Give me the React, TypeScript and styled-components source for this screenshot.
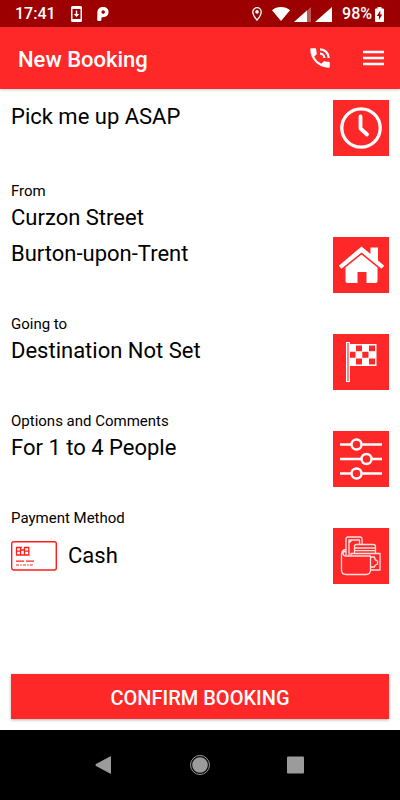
import React from "react";
import styled, { createGlobalStyle } from "styled-components";

const GlobalStyle = createGlobalStyle`
  * { box-sizing: border-box; }
  body {
    margin: 0;
    background: #ffffff;
    color: #000000;
    font-family: Roboto, "Liberation Sans", sans-serif;
  }
  button { font-family: inherit; }
`;

const RED = "#ff2828";

const Screen = styled.div`
  display: flex;
  flex-direction: column;
  min-height: 100vh;
`;

const StatusBar = styled.div`
  display: flex;
  justify-content: space-between;
  align-items: center;
  height: 27px;
  padding: 1px 16px 0 15px;
  background: #9c0000;
  color: #ffffff;
  font-size: 16px;
  font-weight: 500;
  line-height: 20px;
`;

const StatusGroup = styled.div<{ $gap: number }>`
  display: flex;
  align-items: center;
  gap: ${(p) => p.$gap}px;
`;

const Signals = styled.div`
  display: flex;
  align-items: center;
  gap: 4px;
`;

const Battery = styled.span`
  display: flex;
  align-items: center;
  gap: 3px;
`;

const AppBar = styled.header`
  display: flex;
  align-items: center;
  height: 62px;
  padding: 0 15px 0 18px;
  background: ${RED};
  color: #ffffff;
  box-shadow: 0 1px 3px rgba(0, 0, 0, 0.2);
`;

const Title = styled.h1`
  flex: 1;
  margin: 3px 0 0;
  font-size: 22px;
  font-weight: 500;
  line-height: 30px;
`;

const BarActions = styled.div`
  display: flex;
  gap: 30px;
`;

const IconButton = styled.button`
  display: flex;
  align-items: center;
  justify-content: center;
  padding: 0;
  border: 0;
  background: none;
  color: inherit;
  cursor: pointer;
`;

const Content = styled.main`
  display: flex;
  flex: 1;
  flex-direction: column;
  gap: 22px;
  padding: 10px 11px 11px;
`;

const Section = styled.section<{ $first?: boolean }>`
  display: flex;
  justify-content: space-between;
  align-items: flex-end;
  gap: 12px;
  margin-bottom: ${(p) => (p.$first ? 4 : 0)}px;
`;

const Details = styled.div`
  flex: 1;
  min-width: 0;
  padding-bottom: 21px;
`;

const PaymentDetails = styled(Details)`
  padding-bottom: 0;
`;

const Label = styled.h2`
  margin: 0;
  font-size: 15px;
  font-weight: 400;
  line-height: 18px;
`;

const Value = styled.p`
  margin: 0;
  font-size: 22px;
  font-weight: 400;
  line-height: 36px;
`;

const PaymentValue = styled.div`
  display: flex;
  align-items: center;
  gap: 11px;
  height: 57px;
`;

const Tile = styled(IconButton)`
  width: 56px;
  height: 56px;
  flex: none;
  background: ${RED};
  color: #ffffff;
`;

const ConfirmButton = styled.button`
  height: 45px;
  margin-top: auto;
  padding: 2px 0 0;
  border: 0;
  background: ${RED};
  color: #ffffff;
  font-size: 20px;
  font-weight: 500;
  box-shadow: 0 1px 3px rgba(0, 0, 0, 0.3);
  cursor: pointer;
`;

const NavBar = styled.nav`
  display: flex;
  justify-content: center;
  align-items: center;
  gap: 72px;
  height: 70px;
  background: #000000;
  color: #9b9b9b;
`;

const DownloadIcon = () => (
  <svg width="11" height="16" viewBox="0 0 11 16" aria-hidden="true">
    <path fill="#fff" fillRule="evenodd" d="M1.5 0h8A1.5 1.5 0 0 1 11 1.500v13A1.500 1.500 0 0 1 9.500 16h-8A1.500 1.500 0 0 1 0 14.500v-13A1.500 1.500 0 0 1 1.500 0ZM1.500 3v10h8V3Z" />
    <path fill="#fff" d="M4.800 4.500h1.400V8h2.100L5.500 11 2.700 8h2.100Z" />
  </svg>
);

const ParkingIcon = () => (
  <svg width="12" height="14" viewBox="0 0 12 14" aria-hidden="true">
    <path fill="#fff" fillRule="evenodd" d="M6 0c3.400 0 5.600 2 5.600 5S9.400 10.200 6 10.200H5.200c-.5 0-.8.3-.8.800V12.800c0 .7-.4 1.200-1 1.200H1.200C.5 14 .2 13.500.2 12.800L.4 5C.6 2 2.800 0 6 0Zm.2 3.300a1.800 1.800 0 1 0 0 3.600 1.800 1.800 0 0 0 0-3.600Z" />
  </svg>
);

const LocationIcon = () => (
  <svg width="10" height="14" viewBox="0 0 10 14" aria-hidden="true">
    <path fill="none" stroke="#fff" strokeWidth="1.300" d="M5 13.200C3 10.700.8 7.500.8 4.900a4.200 4.200 0 0 1 8.400 0c0 2.600-2.200 5.800-4.200 8.300Z" />
    <circle cx="5" cy="4.900" r="1.800" fill="#fff" />
  </svg>
);

const WifiIcon = () => (
  <svg width="18" height="14" viewBox="0 0 18 14" aria-hidden="true">
    <path fill="#fff" d="M0 3.200C2.500 1 5.600 0 9 0s6.500 1 9 3.200L9 14Z" />
  </svg>
);

const SignalIcon = ({ weak }: { weak?: boolean }) => (
  <svg width="17" height="15" viewBox="0 0 17 15" aria-hidden="true">
    <path fill="#fff" fillOpacity={weak ? 0.35 : 1} d="M0 15 17 0v15Z" />
    {weak && <path fill="#fff" d="M0 15 13 3.500V15Z" />}
  </svg>
);

const BatteryIcon = () => (
  <svg width="9" height="15" viewBox="0 0 9 15" aria-hidden="true">
    <path fill="#fff" d="M2.500 0h4v1.500H8A1 1 0 0 1 9 2.500V14a1 1 0 0 1-1 1H1a1 1 0 0 1-1-1V2.500a1 1 0 0 1 1-1h1.500Z" />
    <path fill="#9c0000" d="M5.300 3.500 1.800 9h2.100v4l3.400-5.500h-2Z" />
  </svg>
);

const PhoneIcon = () => (
  <svg width="26" height="26" viewBox="0 0 24 24" fill="currentColor" aria-hidden="true">
    <path d="M20 15.500c-1.250 0-2.450-.2-3.570-.57a1.020 1.020 0 0 0-1.020.24l-2.200 2.200a15.050 15.050 0 0 1-6.590-6.580l2.200-2.210c.28-.27.36-.66.25-1.010A11.360 11.360 0 0 1 8.500 4c0-.55-.45-1-1-1H4c-.55 0-1 .45-1 1 0 9.390 7.610 17 17 17 .55 0 1-.45 1-1v-3.500c0-.55-.45-1-1-1ZM19 12h2a9 9 0 0 0-9-9v2a7 7 0 0 1 7 7Zm-4 0h2a5 5 0 0 0-5-5v2a3 3 0 0 1 3 3Z" />
  </svg>
);

const MenuIcon = () => (
  <svg width="22" height="16" viewBox="0 0 22 16" aria-hidden="true">
    <path stroke="currentColor" strokeWidth="2.400" d="M0 2h21M0 8h21M0 14h21" />
  </svg>
);

const ClockIcon = () => (
  <svg width="56" height="56" viewBox="0 0 56 56" fill="none" stroke="currentColor" aria-hidden="true">
    <circle cx="28" cy="28" r="19.200" strokeWidth="3.300" />
    <path d="M27.500 16.500V28.500l6.500 6" strokeWidth="3.800" strokeLinecap="round" strokeLinejoin="round" />
  </svg>
);

const HouseIcon = () => (
  <svg width="56" height="56" viewBox="0 0 56 56" fill="currentColor" aria-hidden="true">
    <path d="M28.500 9.500 37.500 17v-6.500h7.500v13l6.200 5.200-2.700 3L28.500 15.500 8.500 31.700l-2.700-3Z" />
    <path d="M28.500 17.500 44.500 30.500V44q0 2-2 2h-9V35h-9v11h-10q-2 0-2-2V30.500Z" />
  </svg>
);

const FlagIcon = () => (
  <svg width="56" height="56" viewBox="0 0 56 56" aria-hidden="true">
    <rect x="13.500" y="8.500" width="3" height="39" fill="#ff8585" stroke="#fff" />
    <path fill="#fff" d="M16 10h27.500v22H16Z" />
    <path fill={RED} d="M23 11.500h6v5.800h-6ZM36 11.500h6v5.800h-6ZM17 17.800h5.500v6H17ZM29.300 17.800h6.200v6h-6.200ZM23 24.500h6v6h-6ZM36 24.500h6v6h-6Z" />
  </svg>
);

const SlidersIcon = () => (
  <svg width="56" height="56" viewBox="0 0 56 56" stroke="currentColor" fill={RED} aria-hidden="true">
    <path d="M7 13.500h42M7 28h42M7 42.500h42" strokeWidth="2.400" />
    <circle cx="23.500" cy="13.500" r="5" strokeWidth="2.400" />
    <circle cx="33.500" cy="28" r="5" strokeWidth="2.400" />
    <circle cx="23.500" cy="42.500" r="5" strokeWidth="2.400" />
  </svg>
);

const WalletIcon = () => (
  <svg width="56" height="56" viewBox="0 0 56 56" fill="none" stroke="#ffe0e0" strokeWidth="1.300" strokeLinejoin="round" aria-hidden="true">
    <path d="M13 27V11q0-2 2-2h12q2 0 2 2v5M16 27V12h10.500v4.500M16 15l3-3" />
    <path d="M21.500 25.500V18.500q0-2 2-2h17q2 0 2 2v7M22 20h20M22 22.700h20" />
    <path d="M18 28v-2.500h29V42h-9.500" />
    <path d="M38 29h3.500q0 3 3 4v3q-3 1-3 3H38" />
    <path d="M13 21.500q-4.500.5-4.500 5V42q0 4.500 4.500 4.500h20q4.500 0 4.500-4.500V28H13q-3 0-3-3 0-1.500 3-1.500" />
  </svg>
);

const CardIcon = () => (
  <svg width="46" height="30" viewBox="0 0 46 30" fill="none" stroke="#ff1e1e" aria-hidden="true">
    <rect x=".7" y=".7" width="44.600" height="28.300" rx="2" strokeWidth="1.400" />
    <path d="M5 6.500h6M13 6.500h5.500M5 14h13.500M5.500 6v8.500M9.500 6v8.500M13.500 6v8.500M17.800 6v8.500M5 10.200h4.500M9.500 9h4M13.500 10.200h4.500" strokeWidth="1.300" />
    <path d="M5 20.200h8M15 20.200h8" strokeWidth="1.200" />
    <path d="M5 24h18" strokeWidth="1.200" strokeDasharray="3 1.200 1.500 1.200" />
  </svg>
);

const BackIcon = () => (
  <svg width="20" height="20" viewBox="0 0 20 20" fill="currentColor" aria-hidden="true">
    <path d="M16 1.500q1-.5 1 .5v16q0 1-1 .5L2 11q-1-1 0-2Z" />
  </svg>
);

const HomeIcon = () => (
  <svg width="20" height="20" viewBox="0 0 20 20" fill="currentColor" aria-hidden="true">
    <circle cx="10" cy="10" r="7.800" />
    <circle cx="10" cy="10" r="9.500" fill="none" stroke="currentColor" />
  </svg>
);

const RecentIcon = () => (
  <svg width="20" height="20" viewBox="0 0 20 20" fill="currentColor" aria-hidden="true">
    <rect x="1" y="1.500" width="17" height="17" rx="1" />
  </svg>
);

const NavButton = styled(IconButton)`
  width: 24px;
  height: 48px;
`;

export default function App() {
  return (
    <>
      <GlobalStyle />
      <Screen>
        <StatusBar>
          <StatusGroup $gap={15}>
            <span>17:41</span>
            <DownloadIcon />
            <ParkingIcon />
          </StatusGroup>
          <StatusGroup $gap={10}>
            <LocationIcon />
            <Signals>
              <WifiIcon />
              <SignalIcon weak />
              <SignalIcon />
            </Signals>
            <Battery>
              98%
              <BatteryIcon />
            </Battery>
          </StatusGroup>
        </StatusBar>
        <AppBar>
          <Title>New Booking</Title>
          <BarActions>
            <IconButton type="button" aria-label="Call"><PhoneIcon /></IconButton>
            <IconButton type="button" aria-label="Menu"><MenuIcon /></IconButton>
          </BarActions>
        </AppBar>
        <Content>
          <Section $first>
            <Details>
              <Value>Pick me up ASAP</Value>
            </Details>
            <Tile type="button" aria-label="Pickup time"><ClockIcon /></Tile>
          </Section>
          <Section>
            <Details>
              <Label>From</Label>
              <Value>Curzon Street</Value>
              <Value>Burton-upon-Trent</Value>
            </Details>
            <Tile type="button" aria-label="Pickup address"><HouseIcon /></Tile>
          </Section>
          <Section>
            <Details>
              <Label>Going to</Label>
              <Value>Destination Not Set</Value>
            </Details>
            <Tile type="button" aria-label="Destination"><FlagIcon /></Tile>
          </Section>
          <Section>
            <Details>
              <Label>Options and Comments</Label>
              <Value>For 1 to 4 People</Value>
            </Details>
            <Tile type="button" aria-label="Options"><SlidersIcon /></Tile>
          </Section>
          <Section>
            <PaymentDetails>
              <Label>Payment Method</Label>
              <PaymentValue>
                <CardIcon />
                <Value>Cash</Value>
              </PaymentValue>
            </PaymentDetails>
            <Tile type="button" aria-label="Payment method"><WalletIcon /></Tile>
          </Section>
          <ConfirmButton type="button">CONFIRM BOOKING</ConfirmButton>
        </Content>
        <NavBar>
          <NavButton type="button" aria-label="Back"><BackIcon /></NavButton>
          <NavButton type="button" aria-label="Home"><HomeIcon /></NavButton>
          <NavButton type="button" aria-label="Recent apps"><RecentIcon /></NavButton>
        </NavBar>
      </Screen>
    </>
  );
}
